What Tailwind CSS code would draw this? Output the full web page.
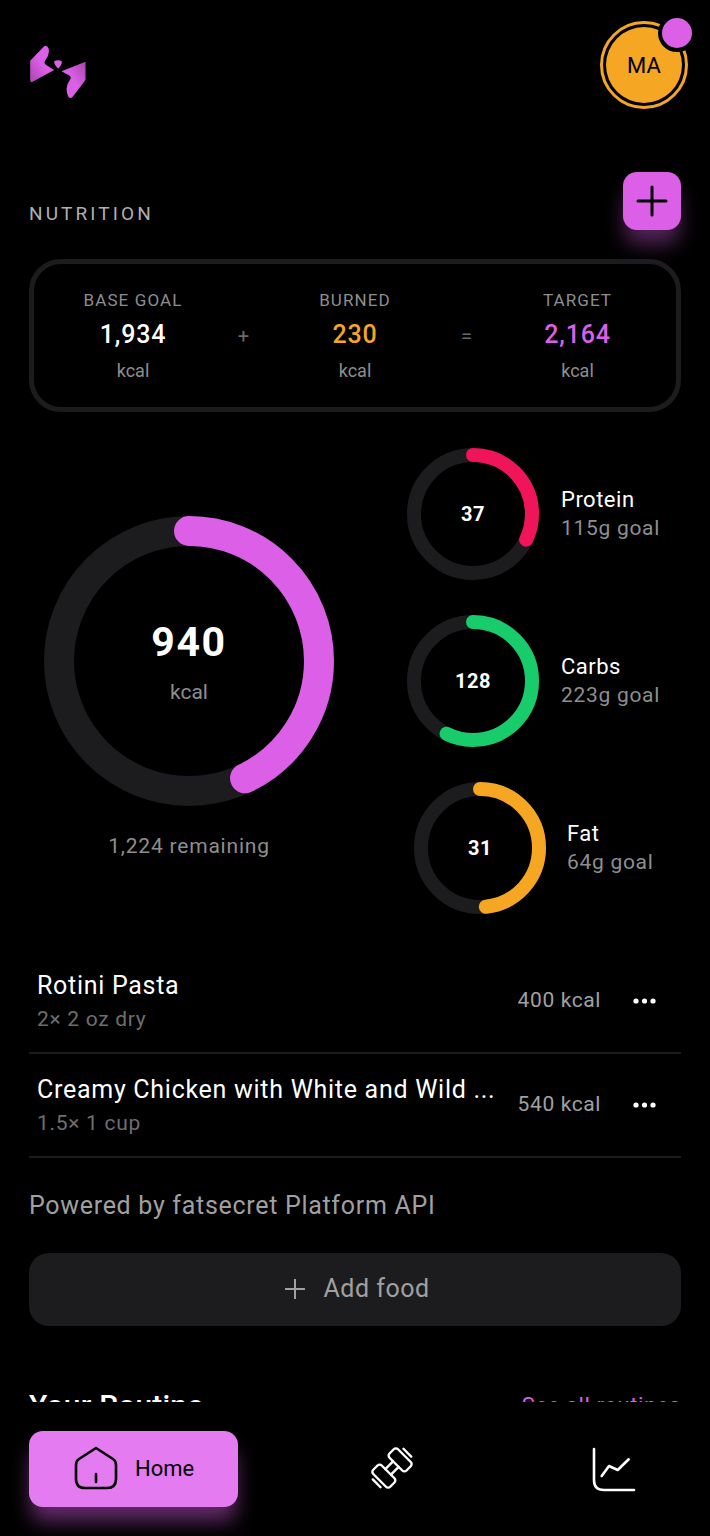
<!DOCTYPE html>
<html lang="en">
<head>
    <meta charset="UTF-8">
    <meta name="viewport" content="width=device-width, initial-scale=1.0">
    <title>Nutrition</title>
    <script src="https://cdn.jsdelivr.net/npm/@tailwindcss/browser@4"></script>
</head>
<body class="bg-black font-['Roboto',sans-serif] text-white">

<div class="w-[710px] h-[1536px] flex flex-col overflow-hidden bg-black">

    <!-- scroll area, cut off by the nav -->
    <main class="h-[1402px] overflow-hidden px-[29px]">

        <!-- header -->
        <header class="h-[172px] pt-[21px] flex justify-between items-start">
            <svg class="mt-[24px]" width="58" height="54" viewBox="55 45 173 162">
                <defs>
                    <linearGradient id="logoA" x1="0" y1="1" x2="1" y2="0">
                        <stop offset="0" stop-color="#a845ad"/>
                        <stop offset="0.5" stop-color="#dc5fe8"/>
                    </linearGradient>
                    <linearGradient id="logoB" x1="1" y1="0" x2="0" y2="1">
                        <stop offset="0" stop-color="#a845ad"/>
                        <stop offset="0.5" stop-color="#dc5fe8"/>
                    </linearGradient>
                </defs>
                <path fill="url(#logoA)" d="M100 49 Q108 44 113 55 Q118 72 104 90 Q97 100 106 105 L130 120 L64 156 Q58 158 58 150 L58 92 Z"/>
                <path fill="url(#logoB)" d="M224 95 L224 150 L185 201 Q176 208 171 197 Q161 170 177 150 Q184 141 174 136 L152 124 Z"/>
                <path fill="#dc5fe8" d="M130 94 Q141 88 153 94 Q154 106 142 116 Q130 106 130 94 Z"/>
            </svg>
            <div class="relative -mr-[7px] w-[88px] h-[88px] rounded-full border-[3px] border-[#f5a623] p-[3px]">
                <div class="w-full h-full rounded-full bg-[#f5a623] text-black text-[22px] flex items-center justify-center">MA</div>
                <div class="absolute top-[-10px] left-[55px] w-[30px] h-[30px] box-content rounded-full bg-[#dc5fe8] border-[4px] border-black"></div>
            </div>
        </header>

        <!-- section title -->
        <div class="h-[58px] flex justify-between items-start">
            <h2 class="mt-[31px] text-[19px] leading-[22px] tracking-[3.1px] text-[#b0b0b0]">NUTRITION</h2>
            <button class="w-[58px] h-[58px] rounded-[14px] bg-[#dc5fe8] flex items-center justify-center shadow-[0_16px_20px_-2px_rgba(220,95,232,0.38)]">
                <svg width="32" height="32" viewBox="0 0 32 32" fill="none" stroke="#000" stroke-width="3" stroke-linecap="round"><path d="M16 2v28M2 16h28"/></svg>
            </button>
        </div>

        <!-- goal card -->
        <section class="mt-[29px] h-[153px] rounded-[32px] border-[5px] border-[#1c1c1e] grid grid-cols-[197px_25px_198px_25px_197px] justify-between items-center text-center">
            <div class="ml-[1px]">
                <div class="text-[17px] leading-[20px] tracking-[1.1px] text-[#8e8e8e]">BASE GOAL</div>
                <div class="mt-[11px] text-[25px] leading-[28px] tracking-[0.8px] font-medium">1,934</div>
                <div class="mt-[12px] text-[18px] leading-[20px] text-[#8e8e8e]">kcal</div>
            </div>
            <div class="text-[20px] text-[#6a6a6a]">+</div>
            <div>
                <div class="text-[17px] leading-[20px] tracking-[1.1px] text-[#8e8e8e]">BURNED</div>
                <div class="mt-[11px] text-[25px] leading-[28px] tracking-[0.8px] font-medium text-[#f5a623]">230</div>
                <div class="mt-[12px] text-[18px] leading-[20px] text-[#8e8e8e]">kcal</div>
            </div>
            <div class="text-[20px] text-[#6a6a6a]">=</div>
            <div>
                <div class="text-[17px] leading-[20px] tracking-[1.1px] text-[#8e8e8e]">TARGET</div>
                <div class="mt-[11px] text-[25px] leading-[28px] tracking-[0.8px] font-medium text-[#dc5fe8]">2,164</div>
                <div class="mt-[12px] text-[18px] leading-[20px] text-[#8e8e8e]">kcal</div>
            </div>
        </section>

        <!-- rings -->
        <section class="mt-[36px] h-[502px] flex">
            <div class="w-[320px] pt-[68px] pl-[15px]">
                <div class="relative w-[290px] h-[290px]">
                    <svg class="w-full h-full -rotate-90" viewBox="0 0 290 290" fill="none" stroke-width="30">
                        <circle cx="145" cy="145" r="130" stroke="#1c1c1e"/>
                        <circle cx="145" cy="145" r="130" stroke="#dc5fe8" stroke-linecap="round" pathLength="100" stroke-dasharray="42.9 100"/>
                    </svg>
                    <div class="absolute inset-0 flex flex-col items-center">
                        <div class="mt-[103px] text-[41px] leading-[46px] tracking-[1.6px] font-bold">940</div>
                        <div class="mt-[15px] text-[21px] leading-[24px] text-[#8e8e8e]">kcal</div>
                    </div>
                </div>
                <div class="mt-[28px] w-[290px] text-center text-[21px] leading-[24px] tracking-[0.8px] text-[#8e8e8e]">1,224 remaining</div>
            </div>
            <div class="pl-[58px] flex flex-col gap-[35px]">
                <div class="flex items-center h-[132px]">
                    <div class="relative w-[132px] h-[132px]">
                        <svg class="w-full h-full -rotate-90" viewBox="0 0 132 132" fill="none" stroke-width="14">
                            <circle cx="66" cy="66" r="59" stroke="#1c1c1e"/>
                            <circle cx="66" cy="66" r="59" stroke="#f0145a" stroke-linecap="round" pathLength="100" stroke-dasharray="32.2 100"/>
                        </svg>
                        <div class="absolute inset-0 flex items-center justify-center text-[20px] tracking-[0.5px] font-bold">37</div>
                    </div>
                    <div class="ml-[22px]">
                        <div class="text-[22px] leading-[28px] tracking-[0.5px]">Protein</div>
                        <div class="text-[21px] leading-[28px] tracking-[0.7px] text-[#8e8e8e]">115g goal</div>
                    </div>
                </div>
                <div class="flex items-center h-[132px]">
                    <div class="relative w-[132px] h-[132px]">
                        <svg class="w-full h-full -rotate-90" viewBox="0 0 132 132" fill="none" stroke-width="14">
                            <circle cx="66" cy="66" r="59" stroke="#1c1c1e"/>
                            <circle cx="66" cy="66" r="59" stroke="#18cc6c" stroke-linecap="round" pathLength="100" stroke-dasharray="57.4 100"/>
                        </svg>
                        <div class="absolute inset-0 flex items-center justify-center text-[20px] tracking-[0.5px] font-bold">128</div>
                    </div>
                    <div class="ml-[22px]">
                        <div class="text-[22px] leading-[28px] tracking-[0.5px]">Carbs</div>
                        <div class="text-[21px] leading-[28px] tracking-[0.7px] text-[#8e8e8e]">223g goal</div>
                    </div>
                </div>
                <div class="flex items-center h-[132px] ml-[7px]">
                    <div class="relative w-[132px] h-[132px]">
                        <svg class="w-full h-full -rotate-90" viewBox="0 0 132 132" fill="none" stroke-width="14">
                            <circle cx="66" cy="66" r="59" stroke="#1c1c1e"/>
                            <circle cx="66" cy="66" r="59" stroke="#f5a623" stroke-linecap="round" pathLength="100" stroke-dasharray="48.4 100"/>
                        </svg>
                        <div class="absolute inset-0 flex items-center justify-center text-[20px] tracking-[0.5px] font-bold">31</div>
                    </div>
                    <div class="ml-[21px]">
                        <div class="text-[22px] leading-[28px] tracking-[0.5px]">Fat</div>
                        <div class="text-[21px] leading-[28px] tracking-[0.7px] text-[#8e8e8e]">64g goal</div>
                    </div>
                </div>
            </div>
        </section>

        <!-- food list -->
        <section>
            <div class="h-[104px] border-b-2 border-[#1c1c1e] flex items-center pl-[8px] pr-[25px]">
                <div>
                    <div class="text-[25px] leading-[32px] tracking-[0.7px] whitespace-nowrap">Rotini Pasta</div>
                    <div class="mt-[3px] text-[21px] leading-[28px] tracking-[0.7px] text-[#6e6e6e]">2× 2 oz dry</div>
                </div>
                <div class="ml-auto text-[21px] tracking-[0.6px] text-[#a0a0a0]">400 kcal</div>
                <svg class="ml-[32px]" width="23" height="6" viewBox="0 0 23 6" fill="#fff"><circle cx="3" cy="3" r="2.6"/><circle cx="11.500" cy="3" r="2.6"/><circle cx="20" cy="3" r="2.6"/></svg>
            </div>
            <div class="h-[104px] border-b-2 border-[#1c1c1e] flex items-center pl-[8px] pr-[25px]">
                <div>
                    <div class="text-[25px] leading-[32px] tracking-[0.72px] whitespace-nowrap">Creamy Chicken with White and Wild ...</div>
                    <div class="mt-[3px] text-[21px] leading-[28px] tracking-[0.7px] text-[#6e6e6e]">1.5× 1 cup</div>
                </div>
                <div class="ml-auto text-[21px] tracking-[0.6px] text-[#a0a0a0]">540 kcal</div>
                <svg class="ml-[32px]" width="23" height="6" viewBox="0 0 23 6" fill="#fff"><circle cx="3" cy="3" r="2.6"/><circle cx="11.500" cy="3" r="2.6"/><circle cx="20" cy="3" r="2.6"/></svg>
            </div>
        </section>

        <p class="mt-[33px] text-[25px] leading-[30px] tracking-[0.7px] text-[#a0a0a0]">Powered by fatsecret Platform API</p>

        <button class="mt-[32px] w-full h-[73px] pl-[5px] pb-[2px] rounded-[20px] bg-[#1c1c1e] flex items-center justify-center gap-[18px] text-[25px] tracking-[0.5px] text-[#a0a0a0]">
            <svg width="20" height="20" viewBox="0 0 20 20" fill="none" stroke="#a0a0a0" stroke-width="2"><path d="M10 0v20M0 10h20"/></svg>
            Add food
        </button>

        <div class="mt-[62px] flex justify-between items-start">
            <h3 class="text-[30px] leading-[36px] tracking-[0.2px] font-medium">Your Routine</h3>
            <a class="mt-[6px] text-[22px] leading-[24px] tracking-[0.6px] text-[#dc5fe8]">See all routines</a>
        </div>
    </main>

    <!-- bottom nav -->
    <nav class="h-[134px] pt-[29px] pl-[29px] flex items-start">
        <a class="w-[209px] h-[76px] pb-[2px] rounded-[14px] bg-[#e47bf0] flex items-center pl-[45px] gap-[17px] text-black text-[22px] shadow-[0_16px_20px_-2px_rgba(220,95,232,0.45)]">
            <svg width="44" height="44" viewBox="0 0 44 44" fill="none" stroke="#000" stroke-width="2.600" stroke-linecap="round" stroke-linejoin="round">
                <path d="M22 2 L39 13 Q42 15 42 19 V33 Q42 42 33 42 H11 Q2 42 2 33 V19 Q2 15 5 13 Z"/>
                <path d="M22 28v8"/>
            </svg>
            Home
        </a>
        <svg class="ml-[130px] mt-[13px] overflow-visible" width="48" height="48" viewBox="0 0 48 48" fill="none" stroke="#fff" stroke-width="2.400" stroke-linecap="round" stroke-linejoin="round">
            <g transform="rotate(-45 24 24)">
                <rect x="6.500" y="12" width="12" height="24" rx="3"/>
                <rect x="29.500" y="12" width="12" height="24" rx="3"/>
                <path d="M18.500 20h11M18.500 28h11"/>
                <path d="M2.300 18.500v11M45.700 18.500v11"/>
            </g>
        </svg>
        <svg class="ml-[175px] mt-[16px]" width="46" height="46" viewBox="0 0 46 46" fill="none" stroke="#fff" stroke-width="2.600" stroke-linecap="round" stroke-linejoin="round">
            <path d="M3 2 V33 Q3 43 13 43 H43"/>
            <path d="M10.700 29 L18 19 L26.700 23 L37.700 12.300"/>
        </svg>
    </nav>
</div>

</body>
</html>
